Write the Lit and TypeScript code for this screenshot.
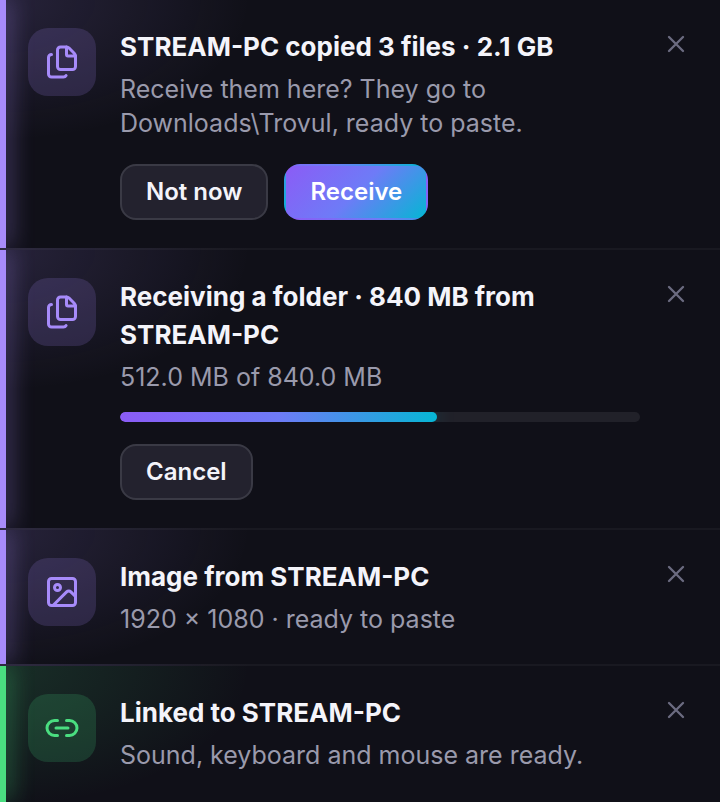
import { LitElement, css, html, svg, nothing } from "lit";
import { customElement, property } from "lit/decorators.js";
import { classMap } from "lit/directives/class-map.js";

type Action = { label: string; primary?: boolean };
type Notice = {
  icon: "files" | "image" | "link";
  title: string;
  text: string;
  tone?: "ok";
  progress?: { value: number; max: number };
  actions?: Action[];
};

const notices: Notice[] = [
  {
    icon: "files",
    title: "STREAM-PC copied 3 files · 2.1 GB",
    text: "Receive them here? They go to Downloads\\Trovul, ready to paste.",
    actions: [{ label: "Not now" }, { label: "Receive", primary: true }],
  },
  {
    icon: "files",
    title: "Receiving a folder · 840 MB from STREAM-PC",
    text: "512.0 MB of 840.0 MB",
    progress: { value: 512, max: 840 },
    actions: [{ label: "Cancel" }],
  },
  { icon: "image", title: "Image from STREAM-PC", text: "1920 × 1080 · ready to paste" },
  { icon: "link", tone: "ok", title: "Linked to STREAM-PC", text: "Sound, keyboard and mouse are ready." },
];

const icons = {
  files: svg`
    <path d="M15 2h-4a2 2 0 0 0-2 2v11a2 2 0 0 0 2 2h8a2 2 0 0 0 2-2V8"/>
    <path d="M16.706 2.706A2.4 2.4 0 0 0 15 2v5a1 1 0 0 0 1 1h5a2.4 2.4 0 0 0-.706-1.706z"/>
    <path d="M5 7a2 2 0 0 0-2 2v11a2 2 0 0 0 2 2h8a2 2 0 0 0 1.732-1"/>`,
  image: svg`
    <rect x="3" y="3" width="18" height="18" rx="2"/>
    <circle cx="9" cy="9" r="2"/>
    <path d="m21 15-3.086-3.086a2 2 0 0 0-2.828 0L6 21"/>`,
  link: svg`
    <path d="M9 17H7A5 5 0 0 1 7 7h2"/>
    <path d="M15 7h2a5 5 0 1 1 0 10h-2"/>
    <path d="M8 12h8"/>`,
};

@customElement("notice-row")
class NoticeRow extends LitElement {
  @property({ attribute: false }) notice!: Notice;

  static styles = css`
    :host { display: block; }
    .row {
      --accent: #a78bfa;
      --accent-rgb: 167, 139, 250;
      position: relative;
      overflow: hidden;
      display: flex;
      align-items: flex-start;
      gap: 24px;
      padding: 28px 24px 28px 28px;
      border-bottom: 2px solid rgba(255, 255, 255, 0.04);
      background: radial-gradient(250px 140px at 0 0, rgba(var(--accent-rgb), 0.15), transparent) #101018;
    }
    .row.ok { --accent: #4ade80; --accent-rgb: 74, 222, 128; }
    :host(:last-child) .row { border-bottom: 0; padding-bottom: 30px; }
    .row::before {
      content: "";
      position: absolute;
      left: 0;
      top: 0;
      bottom: 0;
      width: 6px;
      background: var(--accent);
      box-shadow: 0 0 24px rgba(var(--accent-rgb), 0.9);
    }
    .tile {
      flex: none;
      display: grid;
      place-items: center;
      width: 68px;
      height: 68px;
      border-radius: 20px;
      color: var(--accent);
      background: rgba(var(--accent-rgb), 0.17);
      position: relative;
    }
    svg {
      display: block;
      fill: none;
      stroke: currentColor;
      stroke-width: 2;
      stroke-linecap: round;
      stroke-linejoin: round;
    }
    .tile svg { width: 36px; height: 36px; }
    .body { flex: 1; min-width: 0; }
    .title {
      margin: 0 0 6px;
      font-size: 26px;
      line-height: 38px;
      font-weight: 700;
      color: #f4f4fa;
    }
    .text {
      margin: 0;
      font-size: 25px;
      line-height: 34px;
      color: #9a9aac;
    }
    .meter {
      appearance: none;
      display: block;
      width: 100%;
      height: 10px;
      margin: 18px 0 -2px;
      border: 0;
      border-radius: 5px;
      overflow: hidden;
      background: #212129;
    }
    .meter::-webkit-progress-bar { background: #212129; }
    .meter::-webkit-progress-value {
      border-radius: 5px;
      background: linear-gradient(90deg, #8b5cf6, #6e7bf7 50%, #06b6d4);
      box-shadow: 0 0 20px rgba(6, 182, 212, 0.3);
    }
    .actions { display: flex; flex-wrap: wrap; gap: 16px; margin-top: 24px; }
    button { font: inherit; margin: 0; cursor: pointer; }
    .action {
      height: 56px;
      padding: 0 24px;
      border: 2px solid #3a3a45;
      border-radius: 16px;
      background: #23222e;
      color: #f4f4fa;
      font-size: 24px;
      line-height: 34px;
      font-weight: 600;
    }
    .action.primary {
      border-color: transparent;
      background: linear-gradient(135deg, #8b5cf6, #6e7bf7 50%, #06b6d4);
      color: #fff;
    }
    .close {
      flex: none;
      display: grid;
      place-items: center;
      width: 40px;
      height: 40px;
      margin: -4px 0 0 -8px;
      padding: 0;
      border: 0;
      background: none;
      color: #6b6b80;
    }
    .close svg { width: 28px; height: 28px; }
  `;

  render() {
    const n = this.notice;
    return html`
      <article class=${classMap({ row: true, ok: n.tone === "ok" })}>
        <span class="tile"><svg viewBox="0 0 24 24" aria-hidden="true">${icons[n.icon]}</svg></span>
        <div class="body">
          <h2 class="title">${n.title}</h2>
          <p class="text">${n.text}</p>
          ${n.progress
            ? html`<progress class="meter" aria-label=${n.title} value=${n.progress.value} max=${n.progress.max}></progress>`
            : nothing}
          ${n.actions
            ? html`<div class="actions">
                ${n.actions.map(
                  (a) => html`<button type="button" class=${classMap({ action: true, primary: !!a.primary })}>${a.label}</button>`
                )}
              </div>`
            : nothing}
        </div>
        <button type="button" class="close" aria-label="Dismiss">
          <svg viewBox="0 0 24 24" aria-hidden="true"><path d="M18 6 6 18M6 6l12 12"/></svg>
        </button>
      </article>
    `;
  }
}

@customElement("app-root")
class AppRoot extends LitElement {
  static styles = css`
    :host {
      display: block;
      min-height: 100vh;
      background: #101018;
      font-family: Inter, "Liberation Sans", sans-serif;
    }
  `;

  render() {
    return html`<main>${notices.map((n) => html`<notice-row .notice=${n}></notice-row>`)}</main>`;
  }
}
